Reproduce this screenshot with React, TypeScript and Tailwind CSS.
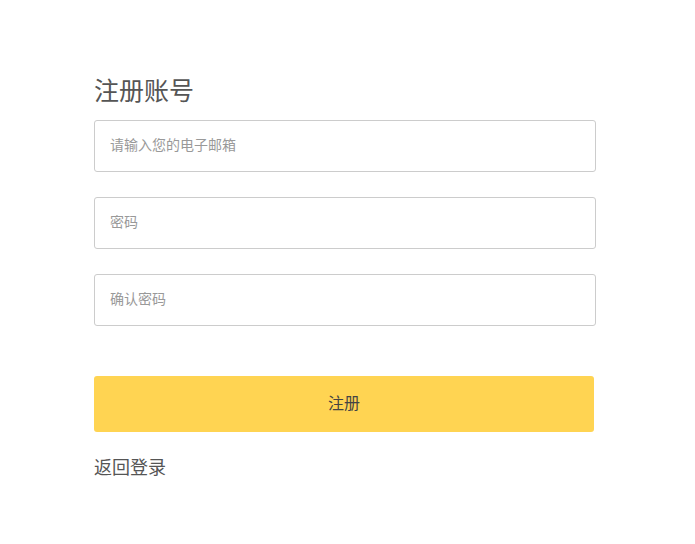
export default function App() {
  return (
    <div
      className="min-h-screen bg-white pl-[94px] pt-[70px]"
      style={{ fontFamily: '"Microsoft YaHei", "Noto Sans CJK SC", sans-serif' }}
    >
      <div className="w-[502px]">
        <h1 className="text-[25px] leading-[38px] text-[#555]">注册账号</h1>
        <form className="mt-[12px] flex flex-col gap-[25px]">
          <input
            className="h-[52px] w-full rounded-[3px] border border-[#ccc] px-[15px] pb-[4px] text-[14px] text-[#333] outline-none placeholder:text-[#999]"
            placeholder="请输入您的电子邮箱"
          />
          <input
            type="password"
            className="h-[52px] w-full rounded-[3px] border border-[#ccc] px-[15px] pb-[4px] text-[14px] text-[#333] outline-none placeholder:text-[#999]"
            placeholder="密码"
          />
          <input
            type="password"
            className="h-[52px] w-full rounded-[3px] border border-[#ccc] px-[15px] pb-[4px] text-[14px] text-[#333] outline-none placeholder:text-[#999]"
            placeholder="确认密码"
          />
        </form>
        <button className="mt-[50px] h-[56px] w-[500px] rounded-[3px] bg-[#ffd452] pb-[4px] text-[16px] text-[#444]">
          注册
        </button>
        <div className="mt-[20px] text-[18px] leading-[28px] text-[#555]">返回登录</div>
      </div>
    </div>
  );
}
